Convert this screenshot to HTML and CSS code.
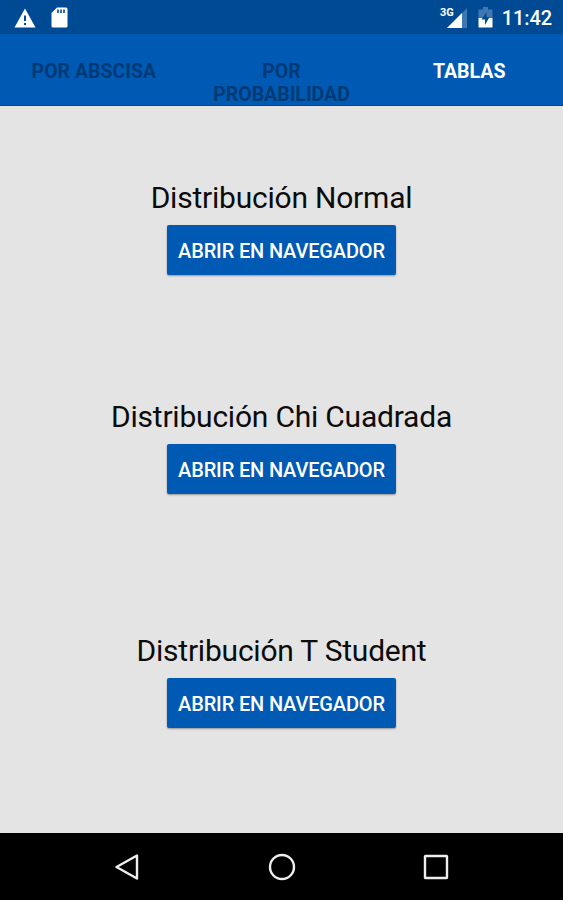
FILE: index.html
```html
<!DOCTYPE html>
<html lang="es">
    <head>
        <meta charset="utf-8" />
        <title>Tablas</title>
        <link rel="stylesheet" href="styles.css">
    </head>
    <body>
        <div class="statusBar">
            <svg class="icoWarning" width="22" height="20" viewBox="0 0 22 20">
                <path d="M11 0.5L21.5 19.5H0.5Z" fill="#fff" />
                <path d="M11 7.5V13M11 15V17" stroke="#004a94" stroke-width="2" />
            </svg>
            <svg class="icoCard" width="17" height="21" viewBox="0 0 17 21">
                <path d="M6 0.5H15Q16.5 0.5 16.5 2V19Q16.5 20.5 15 20.5H2Q0.5 20.5 0.5 19V6Z" fill="#fff" />
                <path d="M7 2.5V6M10 2.5V6M13 2.5V6" stroke="#004a94" stroke-width="1.6" />
            </svg>
            <span class="network">3G</span>
            <svg class="icoSignal" width="20" height="20" viewBox="0 0 20 20">
                <path d="M20 0V20H0Z" fill="#3f77b0" />
                <path d="M15 5V20H0Z" fill="#fff" />
            </svg>
            <svg class="icoBattery" width="15" height="21" viewBox="0 0 15 21">
                <path d="M5 0H10V2.5H14.5V11H0.5V2.5H5Z" fill="#3f77b0" />
                <path d="M0.5 11H14.5V20.5H0.5Z" fill="#fff" />
                <path d="M8.5 5L3.5 12.5H7V18L11.5 10H8.5Z" fill="#004a94" />
            </svg>
            <span class="clock">11:42</span>
        </div>
        <div class="tabs">
            <div class="tab">POR ABSCISA</div>
            <div class="tab">POR PROBABILIDAD</div>
            <div class="tab active">TABLAS</div>
        </div>
        <div class="content">
            <div class="table">
                <div class="title">Distribución Normal</div>
                <button type="button" class="btnOpen">ABRIR EN NAVEGADOR</button>
            </div>
            <div class="table">
                <div class="title">Distribución Chi Cuadrada</div>
                <button type="button" class="btnOpen">ABRIR EN NAVEGADOR</button>
            </div>
            <div class="table student">
                <div class="title">Distribución T Student</div>
                <button type="button" class="btnOpen">ABRIR EN NAVEGADOR</button>
            </div>
        </div>
        <div class="navBar">
            <svg width="28" height="28" viewBox="0 0 28 28">
                <path d="M24 2.5V25.5L3.5 14Z" />
            </svg>
            <svg width="28" height="28" viewBox="0 0 28 28">
                <circle cx="14" cy="14" r="12" />
            </svg>
            <svg width="28" height="28" viewBox="0 0 28 28">
                <rect x="3" y="3" width="22" height="22" rx="0.5" />
            </svg>
        </div>
    </body>
</html>
```
FILE: styles.css
```css
body{
    margin: 0;
    height: 900px;
    display: flex;
    flex-direction: column;
    font-family: Roboto, "Liberation Sans", sans-serif;
    background-color: #e4e4e4;
    overflow: hidden;
}

.statusBar{
    height: 34px;
    flex: none;
    display: flex;
    align-items: center;
    box-sizing: border-box;
    padding: 1px 11px 0 14px;
    background-color: #004a94;
    color: white;
}

.icoCard{
    margin-left: 15px;
}

.network{
    margin-left: auto;
    margin-right: -7px;
    align-self: flex-start;
    margin-top: 6px;
    font-size: 11px;
    line-height: 12px;
    font-weight: 700;
}

.icoBattery{
    margin-left: 11px;
    margin-right: 9px;
}

.clock{
    font-size: 20px;
    font-weight: 500;
    letter-spacing: -0.1px;
}

.tabs{
    height: 72px;
    flex: none;
    display: grid;
    grid-template-columns: repeat(3, 1fr);
    box-sizing: border-box;
    padding-top: 26px;
    border-bottom: 1px solid #0045a5;
    background-color: #0059b3;
}

.tab{
    padding: 0 20px;
    text-align: center;
    font-size: 19.5px;
    line-height: 23px;
    font-weight: 700;
    color: #003a75;
}

.active{
    color: white;
}

.content{
    height: 727px;
    flex: none;
    box-sizing: border-box;
    padding-top: 74px;
}

.table{
    height: 219px;
    display: flex;
    flex-direction: column;
    align-items: center;
}

.student{
    margin-top: 15px;
}

.title{
    font-size: 30px;
    line-height: 36px;
    letter-spacing: -0.22px;
    color: #0c0c0c;
}

.btnOpen{
    width: 229px;
    height: 50px;
    margin-top: 9px;
    padding: 2px 0 0;
    border: none;
    border-radius: 2px;
    background-color: #0059b3;
    box-shadow: 0 1px 2px rgba(0, 0, 0, 0.35);
    color: white;
    font-family: inherit;
    font-size: 20px;
    font-weight: 500;
    letter-spacing: -0.15px;
    white-space: nowrap;
}

.navBar{
    height: 67px;
    flex: none;
    display: flex;
    justify-content: center;
    align-items: center;
    gap: 126.5px;
    background-color: black;
}

.navBar svg{
    fill: none;
    stroke: #eee;
    stroke-width: 2.4;
    stroke-linejoin: round;
}
```
